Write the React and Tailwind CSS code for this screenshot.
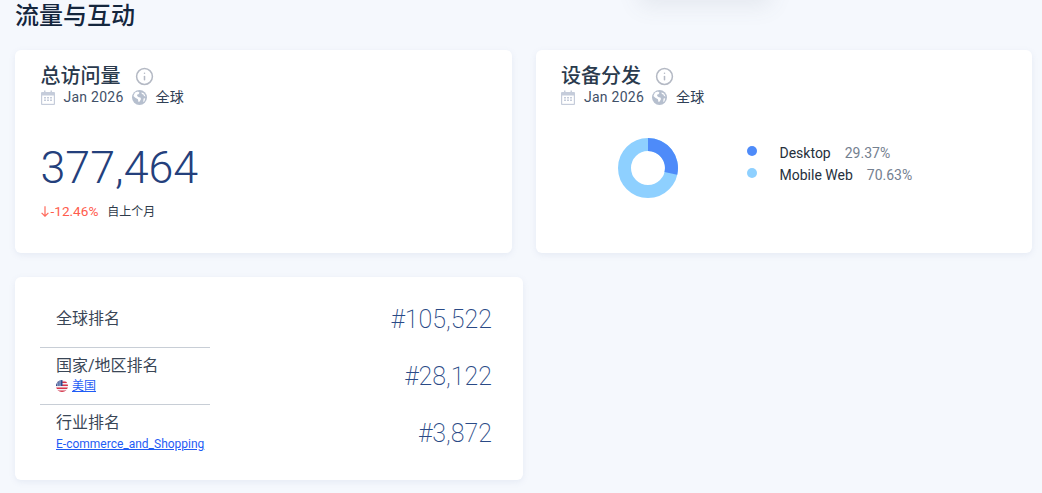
import { Info } from "lucide-react";

const font = { fontFamily: 'Roboto, "Noto Sans CJK SC", sans-serif' };

function CalendarIcon() {
  return (
    <svg width="14" height="15" viewBox="0 0 14 15" className="shrink-0">
      <path d="M3 0.5h1.5V2h5V0.5H11V2h2a1 1 0 0 1 1 1v11a1 1 0 0 1-1 1H1a1 1 0 0 1-1-1V3a1 1 0 0 1 1-1h2z" fill="#c5ccda" />
      <rect x="1.2" y="5.5" width="11.6" height="8.3" fill="#fff" />
      <path d="M3 7h2v1.4H3zM6 7h2v1.4H6zM9 7h2v1.4H9zM3 9.5h2v1.4H3zM6 9.5h2v1.4H6zM9 9.5h2v1.4H9z" fill="#c5ccda" />
    </svg>
  );
}

function GlobeIcon() {
  return (
    <svg width="15" height="15" viewBox="0 0 15 15" className="shrink-0">
      <circle cx="7.5" cy="7.5" r="7.5" fill="#b6bfce" />
      <path d="M3 2.5l3-1 1.5 1.2-1 1.5-1.2.3-.2 1.5 1.7 1.2 1.6.2.6 1.5-1.3 2.6-1.2.4-.6-2.6-2.6-1.6L1.4 6z" fill="#fff" />
      <path d="M9.5 2.2l2.5 1.2 1.6 3-1.6-.4-.6-1.4-1.6-.7z" fill="#fff" />
      <path d="M11.6 8.4l1.6-.2-.8 3-1.2.8z" fill="#fff" />
    </svg>
  );
}

function UsFlag() {
  return (
    <svg width="12" height="12" viewBox="0 0 12 12" className="shrink-0">
      <defs>
        <clipPath id="flagClip">
          <circle cx="6" cy="6" r="6" />
        </clipPath>
      </defs>
      <g clipPath="url(#flagClip)">
        <rect width="12" height="12" fill="#f1f1f4" />
        <rect y="1.5" width="12" height="1.5" fill="#d8354a" />
        <rect y="4.5" width="12" height="1.5" fill="#d8354a" />
        <rect y="7.5" width="12" height="1.5" fill="#d8354a" />
        <rect y="10.5" width="12" height="1.5" fill="#d8354a" />
        <rect width="6.5" height="6" fill="#2b4a8f" />
        <rect x="1.5" y="0" width="0.8" height="6" fill="#dfe6f2" />
        <rect x="3.6" y="0" width="0.8" height="6" fill="#dfe6f2" />
      </g>
    </svg>
  );
}

function DownArrow() {
  return (
    <svg width="8" height="11" viewBox="0 0 8 11" fill="none" stroke="#ff6a5c" strokeWidth="1.2" className="shrink-0">
      <path d="M4 0.3V10.2M0.6 6.8L4 10.2L7.4 6.8" />
    </svg>
  );
}

function CardHead({ title }) {
  return (
    <>
      <div className="flex items-center h-[22px]">
        <span className="text-xl leading-[22px] font-medium text-[#2a3a4d]">{title}</span>
        <Info size={19} strokeWidth={1.9} className="ml-[14px] mt-[1px] text-[#b4b9c4]" />
      </div>
      <div className="flex items-center h-[20px] text-sm tracking-[0.25px] text-[#3f5068]">
        <CalendarIcon />
        <span className="ml-[9px]">Jan 2026</span>
        <span className="ml-[8px]"><GlobeIcon /></span>
        <span className="ml-[9px] text-[#2f4056]">全球</span>
      </div>
    </>
  );
}

function Donut() {
  // 29.37% 从顶部顺时针开始
  return (
    <svg width="60" height="60" viewBox="0 0 60 60">
      <circle cx="30" cy="30" r="23.5" fill="none" stroke="#8ed0ff" strokeWidth="13" />
      <path d="M30 0A30 30 0 0 1 59.2 36.8L46.5 33.9A17 17 0 0 0 30 13Z" fill="#4e8bf9" />
    </svg>
  );
}

function RankRow({ label, value, sub, border, pad }) {
  return (
    <div className="flex items-center justify-between h-[57px]">
      <div className={`w-[170px] h-full pl-4 flex flex-col justify-center ${pad} ${border ? "border-b border-[#c8ced6]" : ""}`}>
        <div className="text-base leading-[22px] text-[#3a4656]">{label}</div>
        {sub}
      </div>
      <div className="text-[25px] font-extralight text-[#2a4a86]">{value}</div>
    </div>
  );
}

export default function App() {
  return (
    <div style={font} className="relative h-screen w-full overflow-hidden bg-[#f5f8fd] px-[15px]">
      {/* 顶部浮层的阴影 */}
      <div className="absolute left-[645px] top-[-30px] h-[30px] w-[120px] shadow-[0_0_22px_6px_rgba(90,100,120,0.1)]" />

      <h1 className="h-[50px] pt-[2px] text-2xl leading-[28px] font-medium text-[#14263d]">流量与互动</h1>

      <div className="grid grid-cols-2 gap-6 w-[1017px]">
        <div className="h-[203px] rounded-md bg-white pl-[25.5px] pt-[15px] shadow-[0_2px_6px_rgba(120,140,180,0.12)]">
          <CardHead title="总访问量" />
          <div className="mt-[34px] text-[44.8px] leading-[54px] font-light text-[#24407c]">377,464</div>
          <div className="mt-[6px] flex items-center h-[20px]">
            <DownArrow />
            <span className="ml-[2px] text-[13.6px] text-[#ff5c4d]">-12.46%</span>
            <span className="ml-[9px] mt-[2px] text-xs text-[#2f3b4a]">自上个月</span>
          </div>
        </div>

        <div className="h-[203px] rounded-md bg-white pl-[25.5px] pt-[15px] shadow-[0_2px_6px_rgba(120,140,180,0.12)]">
          <CardHead title="设备分发" />
          <div className="mt-[31px] flex items-center">
            <div className="ml-[56.5px]"><Donut /></div>
            <div className="ml-[69.5px] mb-[9px] flex flex-col text-sm">
              <div className="flex items-center h-[22px]">
                <span className="-mt-[3px] h-[10px] w-[10px] rounded-full bg-[#4e8bf9]" />
                <span className="ml-[22.5px] text-[#26303c]">Desktop</span>
                <span className="ml-[14px] text-[#74808f]">29.37%</span>
              </div>
              <div className="flex items-center h-[22px]">
                <span className="-mt-[3px] h-[10px] w-[10px] rounded-full bg-[#8ed0ff]" />
                <span className="ml-[22.5px] text-[#26303c]">Mobile Web</span>
                <span className="ml-[14px] text-[#74808f]">70.63%</span>
              </div>
            </div>
          </div>
        </div>
      </div>

      <div className="mt-6 h-[203px] w-[508px] rounded-md bg-white pl-[25px] pr-[31px] pt-[14px] shadow-[0_2px_6px_rgba(120,140,180,0.12)]">
        <RankRow label="全球排名" value="#105,522" border />
        <RankRow
          label="国家/地区排名"
          value="#28,122"
          border
          pad="pb-[4px]"
          sub={
            <div className="mt-[1px] flex items-center text-xs leading-[16px]">
              <UsFlag />
              <a className="ml-1 text-[#1f5cf5] underline">美国</a>
            </div>
          }
        />
        <RankRow
          label="行业排名"
          value="#3,872"
          pad="pb-[3px]"
          sub={<a className="mt-[2px] text-xs leading-[16px] text-[#1f5cf5] underline">E-commerce_and_Shopping</a>}
        />
      </div>
    </div>
  );
}
